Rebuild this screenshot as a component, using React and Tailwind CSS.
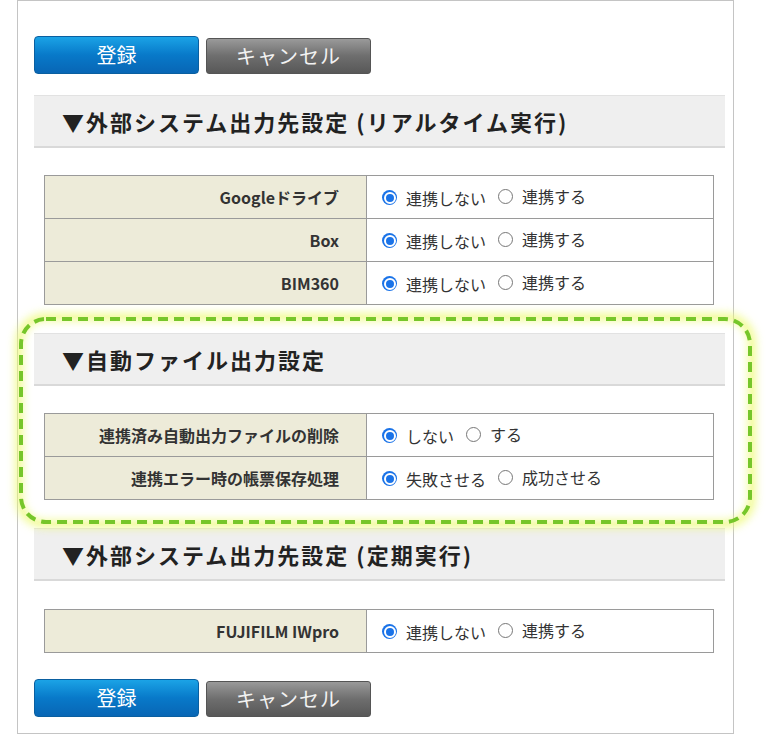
const font = { fontFamily: '"Noto Sans CJK JP", "Noto Sans", sans-serif' };

const Radio = ({ checked, label }) => (
  <span className="inline-flex items-center">
    {checked ? (
      <span className="w-[15px] h-[15px] rounded-full bg-[#1a73e8] flex items-center justify-center">
        <span className="w-[12px] h-[12px] rounded-full border-[2px] border-white bg-[#1a73e8]" />
      </span>
    ) : (
      <span className="w-[15px] h-[15px] rounded-full border border-[#777] bg-white" />
    )}
    <span className="ml-[9px] mr-[12px] text-[16px] text-[#333]">{label}</span>
  </span>
);

const Buttons = () => (
  <div className="flex gap-[7px]">
    <button className="w-[165px] h-[38px] rounded-[4px] border border-[#0a5fa0] bg-gradient-to-b from-[#1ba3e6] via-[#0879c9] to-[#0866b5] text-white text-[20px]">
      登録
    </button>
    <button className="w-[165px] h-[36px] mt-[2px] rounded-[3px] border border-[#555] bg-gradient-to-b from-[#9a9a9a] via-[#6e6e6e] to-[#585858] text-[#f2f2f2] text-[20px] tracking-[1px]">
      キャンセル
    </button>
  </div>
);

const Header = ({ title }) => (
  <div className="h-[53px] bg-[#efefef] border-t border-[#e2e2e2] border-b-2 border-b-[#d9d9d9] flex items-center pl-[28px] mr-[8px]">
    <h2 className="text-[22px] font-bold text-[#222] tracking-[2px]">{title}</h2>
  </div>
);

const Table = ({ rows }) => (
  <table className="ml-[10px] w-[670px] border-collapse border border-[#9a9a9a]">
    <tbody>
      {rows.map((r) => (
        <tr key={r.label} className="h-[43px]">
          <th className="w-[322px] bg-[#edebd9] border border-[#9a9a9a] text-right pr-[27px] text-[16px] font-bold text-[#333]">
            {r.label}
          </th>
          <td className="border border-[#9a9a9a] pl-[15px] bg-white">
            <Radio checked label={r.a} />
            <Radio label={r.b} />
          </td>
        </tr>
      ))}
    </tbody>
  </table>
);

export default function App() {
  return (
    <div className="relative w-[770px] h-[735px] bg-white" style={font}>
      <div className="ml-[17px] w-[717px] h-[734px] border border-[#c4c4c4] pl-[16px] pt-[35px]">
        <Buttons />
        <div className="mt-[21px]">
          <Header title="▼外部システム出力先設定 (リアルタイム実行)" />
        </div>
        <div className="mt-[27px]">
          <Table
            rows={[
              { label: "Googleドライブ", a: "連携しない", b: "連携する" },
              { label: "Box", a: "連携しない", b: "連携する" },
              { label: "BIM360", a: "連携しない", b: "連携する" },
            ]}
          />
        </div>
        <div className="mt-[28px]">
          <Header title="▼自動ファイル出力設定" />
        </div>
        <div className="mt-[27px]">
          <Table
            rows={[
              { label: "連携済み自動出力ファイルの削除", a: "しない", b: "する" },
              { label: "連携エラー時の帳票保存処理", a: "失敗させる", b: "成功させる" },
            ]}
          />
        </div>
        <div className="mt-[28px]">
          <Header title="▼外部システム出力先設定 (定期実行)" />
        </div>
        <div className="mt-[28px]">
          <Table rows={[{ label: "FUJIFILM IWpro", a: "連携しない", b: "連携する" }]} />
        </div>
        <div className="mt-[26px]">
          <Buttons />
        </div>
      </div>
      <div className="absolute left-[19px] top-[317px] w-[733px] h-[207px] rounded-[26px] shadow-[0_0_9px_4px_rgba(238,250,120,0.75),inset_0_0_9px_4px_rgba(238,250,120,0.75)] pointer-events-none">
        <svg width="733" height="207" className="absolute inset-0">
          <rect
            x="2"
            y="2"
            width="729"
            height="203"
            rx="25"
            fill="none"
            stroke="#76c62a"
            strokeWidth="4"
            strokeDasharray="10 6"
          />
        </svg>
      </div>
    </div>
  );
}
